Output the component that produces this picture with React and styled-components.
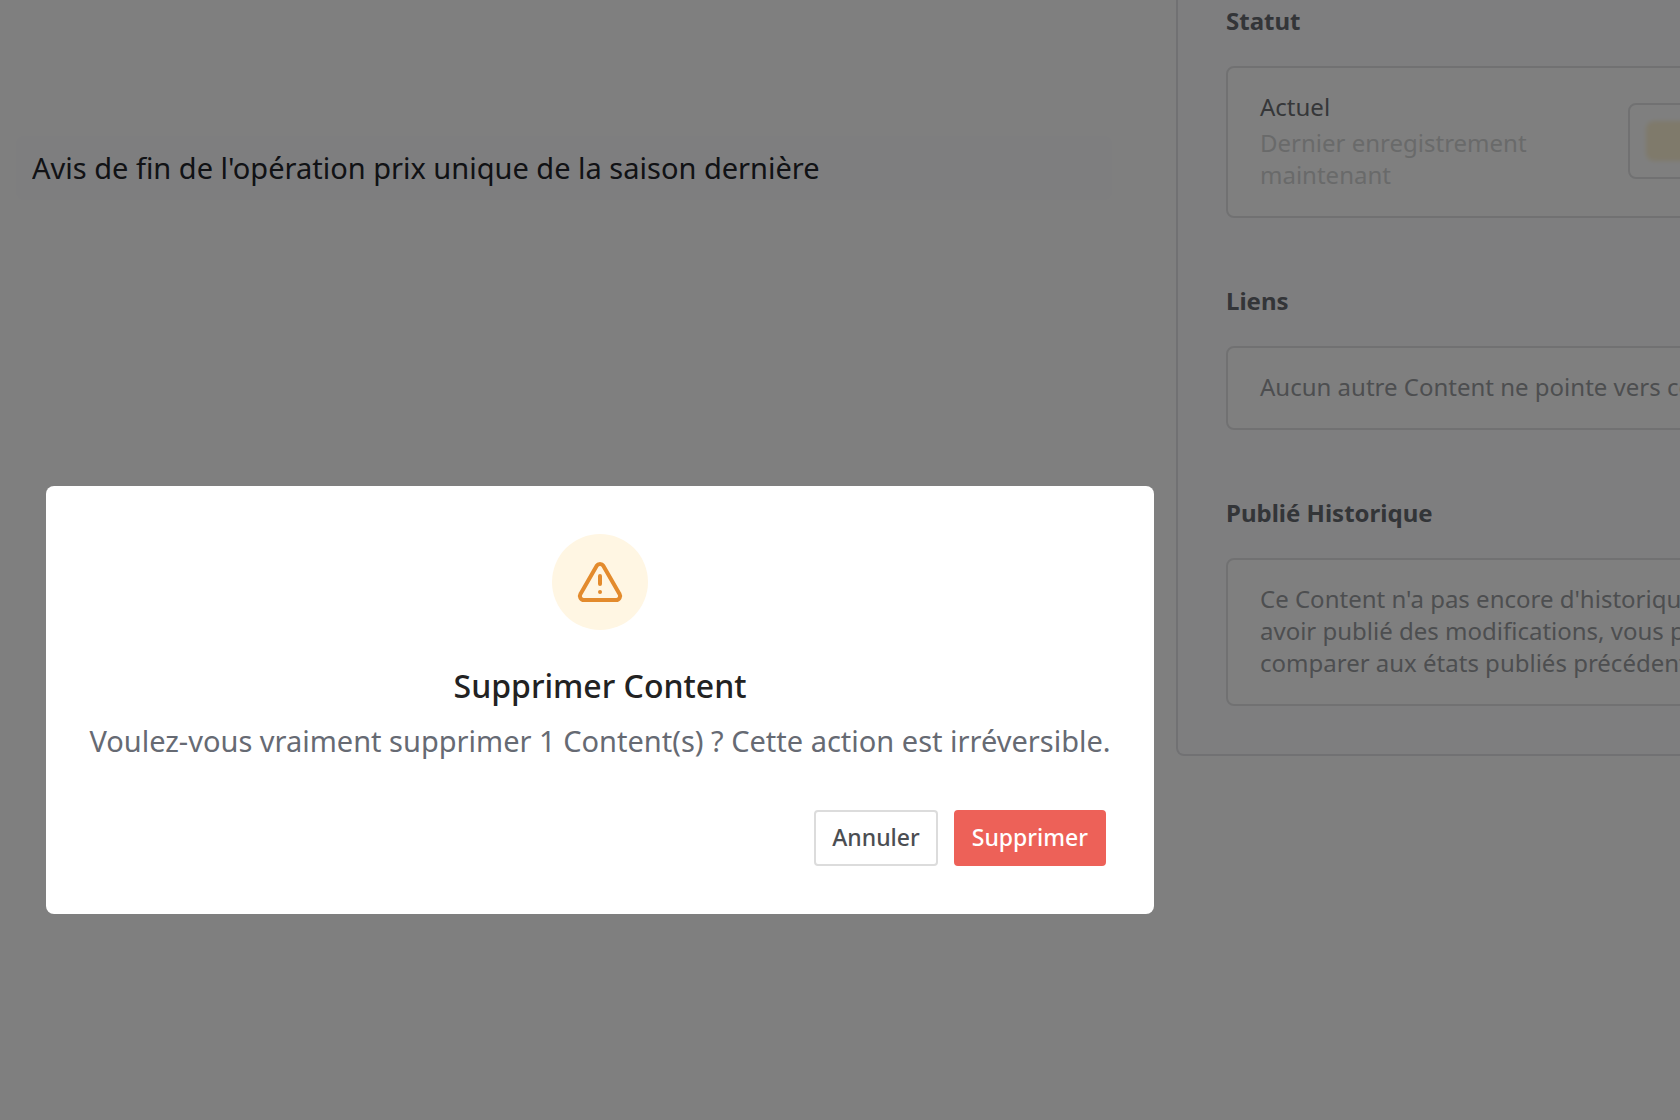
import React from "react";
import styled, { createGlobalStyle } from "styled-components";


const GlobalStyle = createGlobalStyle`
    * {
        box-sizing: border-box;
    }

    body {
        margin: 0;
        background-color: #fff;
        color: #22252a;
        font-family: "Noto Sans", sans-serif;
        font-size: 24px;
        line-height: 32px;
    }

    h2, h3, p {
        margin: 0;
    }
`

const StylePage = styled.div`
    display: flex;
    align-items: flex-start;
    gap: 64px;
    min-height: 100vh;
    padding-left: 16px;
    overflow: hidden;
`

const StyleEditor = styled.main`
    flex: 1;
    min-width: 0;
    padding-top: 136px;
`

const StyleTitleInput = styled.input`
    display: block;
    width: 100%;
    height: 64px;
    padding: 0 16px 2px;
    border: none;
    border-radius: 8px;
    background-color: #fcfcff;
    color: #22252a;
    font-family: inherit;
    font-size: 29px;
`

const StyleSidebar = styled.aside`
    display: flex;
    flex: none;
    flex-direction: column;
    gap: 64px;
    width: 704px;
    margin-right: -200px;
    padding: 2px 48px 48px;
    border: 2px solid #e2e3e6;
    border-top: none;
    border-radius: 0 0 8px 8px;
    background-color: #fcfcff;
`

const StyleSection = styled.section`
    display: flex;
    flex-direction: column;
    gap: 26px;
`

const StyleSectionTitle = styled.h3`
    font-size: 24px;
    font-weight: 700;
    line-height: 38px;
    color: #676a70;
`

const StyleCard = styled.div`
    display: flex;
    align-items: center;
    justify-content: space-between;
    gap: 32px;
    padding: 23px 32px 25px;
    border: 2px solid #e2e3e5;
    border-radius: 8px;
    background-color: #fff;
`

const StyleCardText = styled.p`
    color: #9a9da1;
    white-space: nowrap;
`

const StyleStatus = styled.div`
    display: flex;
    flex-direction: column;
    gap: 4px;
    width: 320px;
`

const StyleStatusName = styled.p`
    color: #6c6f73;
`

const StyleStatusDate = styled.p`
    color: #d3d4d5;
`

const StyleBadge = styled.div`
    width: 168px;
    height: 76px;
    padding: 16px;
    border: 2px solid #e2e3e5;
    border-radius: 8px;
`

const StyleBadgeFill = styled.div`
    height: 40px;
    border-radius: 8px;
    background-color: #fff4d6;
    filter: blur(2px);
`

const StyleOverlay = styled.div`
    position: fixed;
    inset: 0;
    display: flex;
    align-items: center;
    justify-content: center;
    padding: 280px 480px 0 0;
    background-color: rgba(0, 0, 0, 0.5);
`

const StyleDialog = styled.div`
    display: flex;
    flex: none;
    flex-direction: column;
    align-items: center;
    width: 1108px;
    padding: 48px;
    border-radius: 8px;
    background-color: #fff;
`

const StyleIconCircle = styled.div`
    display: flex;
    align-items: center;
    justify-content: center;
    width: 96px;
    height: 96px;
    margin-bottom: 32px;
    border-radius: 50%;
    background-color: #fff6e3;
    color: #e38b2d;
`

const StyleDialogTitle = styled.h2`
    margin-bottom: 8px;
    font-size: 32px;
    font-weight: 500;
    line-height: 48px;
    color: #222;
`

const StyleDialogText = styled.p`
    font-size: 29px;
    line-height: 46px;
    color: #666a73;
    white-space: nowrap;
`

const StyleActions = styled.div`
    display: flex;
    align-self: stretch;
    justify-content: flex-end;
    gap: 16px;
    margin-top: 46px;
`

const StyleButton = styled.button`
    height: 56px;
    padding: 0 16px 2px;
    border: 2px solid ${(props) => (props.$danger ? "#ed6158" : "#dcdcdc")};
    border-radius: 4px;
    background-color: ${(props) => (props.$danger ? "#ed6158" : "#fff")};
    color: ${(props) => (props.$danger ? "#fff" : "#4b4e52")};
    font-family: inherit;
    font-size: 23px;
    font-weight: 500;
    cursor: pointer;
`


function WarningIcon () {
    return(
        <svg width="48" height="48" viewBox="0 0 48 48" fill="none" stroke="currentColor" strokeWidth="4" strokeLinecap="round" strokeLinejoin="round" aria-hidden="true">
            <path d="M20.6 7.9 4.5 35.9A4 4 0 0 0 7.9 42H40.1A4 4 0 0 0 43.5 35.9L27.4 7.9A4 4 0 0 0 20.6 7.9Z" />
            <path d="M24 18V26M24 34H24.02" />
        </svg>
    )
}

function Section (props) {
    return(
        <StyleSection>
            <StyleSectionTitle>{props.title}</StyleSectionTitle>
            <StyleCard>{props.children}</StyleCard>
        </StyleSection>
    )
}

function DeleteDialog () {
    return(
        <StyleOverlay>
            <StyleDialog role="dialog" aria-modal="true" aria-labelledby="delete-title">
                <StyleIconCircle><WarningIcon /></StyleIconCircle>
                <StyleDialogTitle id="delete-title">Supprimer Content</StyleDialogTitle>
                <StyleDialogText>Voulez-vous vraiment supprimer 1 Content(s) ? Cette action est irréversible.</StyleDialogText>
                <StyleActions>
                    <StyleButton type="button">Annuler</StyleButton>
                    <StyleButton type="button" $danger>Supprimer</StyleButton>
                </StyleActions>
            </StyleDialog>
        </StyleOverlay>
    )
}

function App () {
    return(
        <>
            <GlobalStyle />
            <StylePage>
                <StyleEditor>
                    <StyleTitleInput aria-label="Titre" defaultValue="Avis de fin de l'opération prix unique de la saison dernière" />
                </StyleEditor>
                <StyleSidebar>
                    <Section title="Statut">
                        <StyleStatus>
                            <StyleStatusName>Actuel</StyleStatusName>
                            <StyleStatusDate>Dernier enregistrement maintenant</StyleStatusDate>
                        </StyleStatus>
                        <StyleBadge><StyleBadgeFill /></StyleBadge>
                    </Section>
                    <Section title="Liens">
                        <StyleCardText>Aucun autre Content ne pointe vers ce</StyleCardText>
                    </Section>
                    <Section title="Publié Historique">
                        <StyleCardText>
                            Ce Content n'a pas encore d'historique<br />
                            avoir publié des modifications, vous po<br />
                            comparer aux états publiés précédents
                        </StyleCardText>
                    </Section>
                </StyleSidebar>
            </StylePage>
            <DeleteDialog />
        </>
    )
}

export default App;
